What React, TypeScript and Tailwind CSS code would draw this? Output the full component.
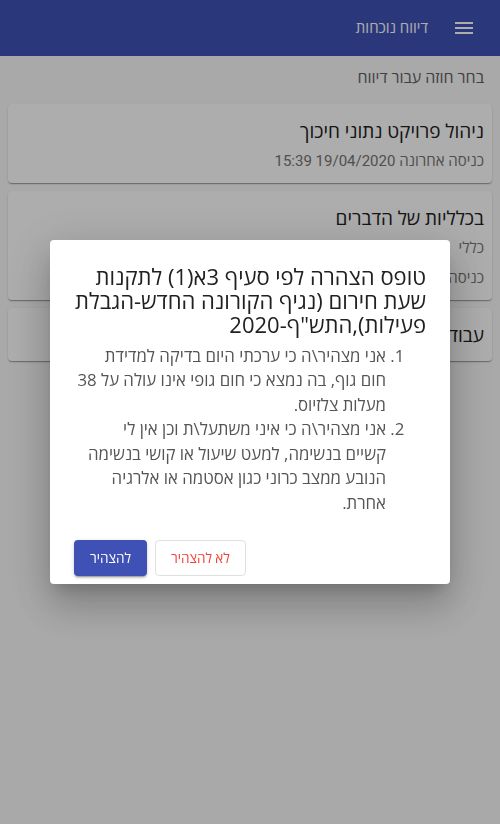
import React from 'react'

interface Contract {
  title: string
  category?: string
  lastEntry?: string
}

const contracts: Contract[] = [
  { title: 'ניהול פרויקט נתוני חיכוך', lastEntry: '19/04/2020 15:39' },
  { title: 'בכלליות של הדברים', category: 'כללי', lastEntry: '19/04/2020 15:39' },
  { title: 'עבודה שוטפת' },
]

// declaration clauses, pre-broken to the lines of the original form
const clauses: string[][] = [
  ['אני מצהיר\\ה כי ערכתי היום בדיקה למדידת', 'חום גוף, בה נמצא כי חום גופי אינו עולה על 38', 'מעלות צלזיוס.'],
  [
    'אני מצהיר\\ה כי איני משתעל\\ת וכן אין לי',
    'קשיים בנשימה, למעט שיעול או קושי בנשימה',
    'הנובע ממצב כרוני כגון אסטמה או אלרגיה',
    'אחרת.',
  ],
]

const MenuIcon = () => (
  <svg width="24" height="24" viewBox="0 0 24 24" fill="currentColor">
    <path d="M3 18h18v-2H3v2zm0-5h18v-2H3v2zm0-7v2h18V6H3z" />
  </svg>
)

function ContractCard({ c }: { c: Contract }) {
  return (
    <div className="rounded-[4px] bg-white px-2 pb-[13px] pt-4 shadow-[0_2px_1px_-1px_rgba(0,0,0,0.2),0_1px_1px_0_rgba(0,0,0,0.14),0_1px_3px_0_rgba(0,0,0,0.12)]">
      <div className="text-[19px] leading-6 text-[#212121]">{c.title}</div>
      {c.category && <div className="mt-2 text-[15px] leading-[18px] text-[#757575]">{c.category}</div>}
      {c.lastEntry && (
        <div className={c.category ? 'mt-3 text-[15px] leading-[18px] text-[#757575]' : 'mt-2 text-[15px] leading-[18px] text-[#757575]'}>
          כניסה אחרונה {c.lastEntry}
        </div>
      )}
    </div>
  )
}

export default function App() {
  return (
    <div dir="rtl" className="min-h-screen bg-[#fafafa] font-['Roboto','Open_Sans',sans-serif]">
      <header className="flex h-14 items-center gap-4 bg-[#3f51b5] px-4 text-white">
        <button type="button" className="flex h-10 w-10 items-center justify-center">
          <MenuIcon />
        </button>
        <span className="text-[15px] font-medium">דיווח נוכחות</span>
      </header>

      <main className="px-2">
        <p className="px-2 pb-4 pt-3 text-[16px] leading-5 text-[#616161]">בחר חוזה עבור דיווח</p>
        <div className="flex flex-col gap-2">
          {contracts.map((c) => (
            <ContractCard key={c.title} c={c} />
          ))}
        </div>
      </main>

      {/* dialog backdrop */}
      <div className="fixed inset-0 flex items-center justify-center bg-black/[0.32]">
        <div className="w-[400px] rounded-[4px] bg-white p-6 font-['Open_Sans',sans-serif] shadow-[0_11px_15px_-7px_rgba(0,0,0,0.2),0_24px_38px_3px_rgba(0,0,0,0.14),0_9px_46px_8px_rgba(0,0,0,0.12)]">
          <h2 className="text-[22px] leading-6 text-[#212121]">
            טופס הצהרה לפי סעיף 3א(1) לתקנות שעת חירום (נגיף הקורונה החדש-הגבלת פעילות),התש"ף-2020
          </h2>
          <ol className="mb-[17px] mt-2 list-decimal pr-10 text-[16.8px] leading-[24.5px] text-[#555]">
            {clauses.map((lines, i) => (
              <li key={i} className="whitespace-nowrap">
                {lines.map((l, j) => (
                  <React.Fragment key={j}>
                    {j > 0 && <br />}
                    {l}
                  </React.Fragment>
                ))}
              </li>
            ))}
          </ol>
          <div className="-mb-6 flex min-h-[52px] items-center justify-end gap-2 py-2 font-['Roboto','Open_Sans',sans-serif]">
            <button type="button" className="h-9 rounded-[4px] border border-black/[0.12] px-[15px] text-[13.5px] font-medium text-[#f44336]">
              לא להצהיר
            </button>
            <button
              type="button"
              className="h-9 rounded-[4px] bg-[#3f51b5] px-4 text-[13.5px] font-medium text-white shadow-[0_3px_1px_-2px_rgba(0,0,0,0.2),0_2px_2px_0_rgba(0,0,0,0.14),0_1px_5px_0_rgba(0,0,0,0.12)]"
            >
              להצהיר
            </button>
          </div>
        </div>
      </div>
    </div>
  )
}
